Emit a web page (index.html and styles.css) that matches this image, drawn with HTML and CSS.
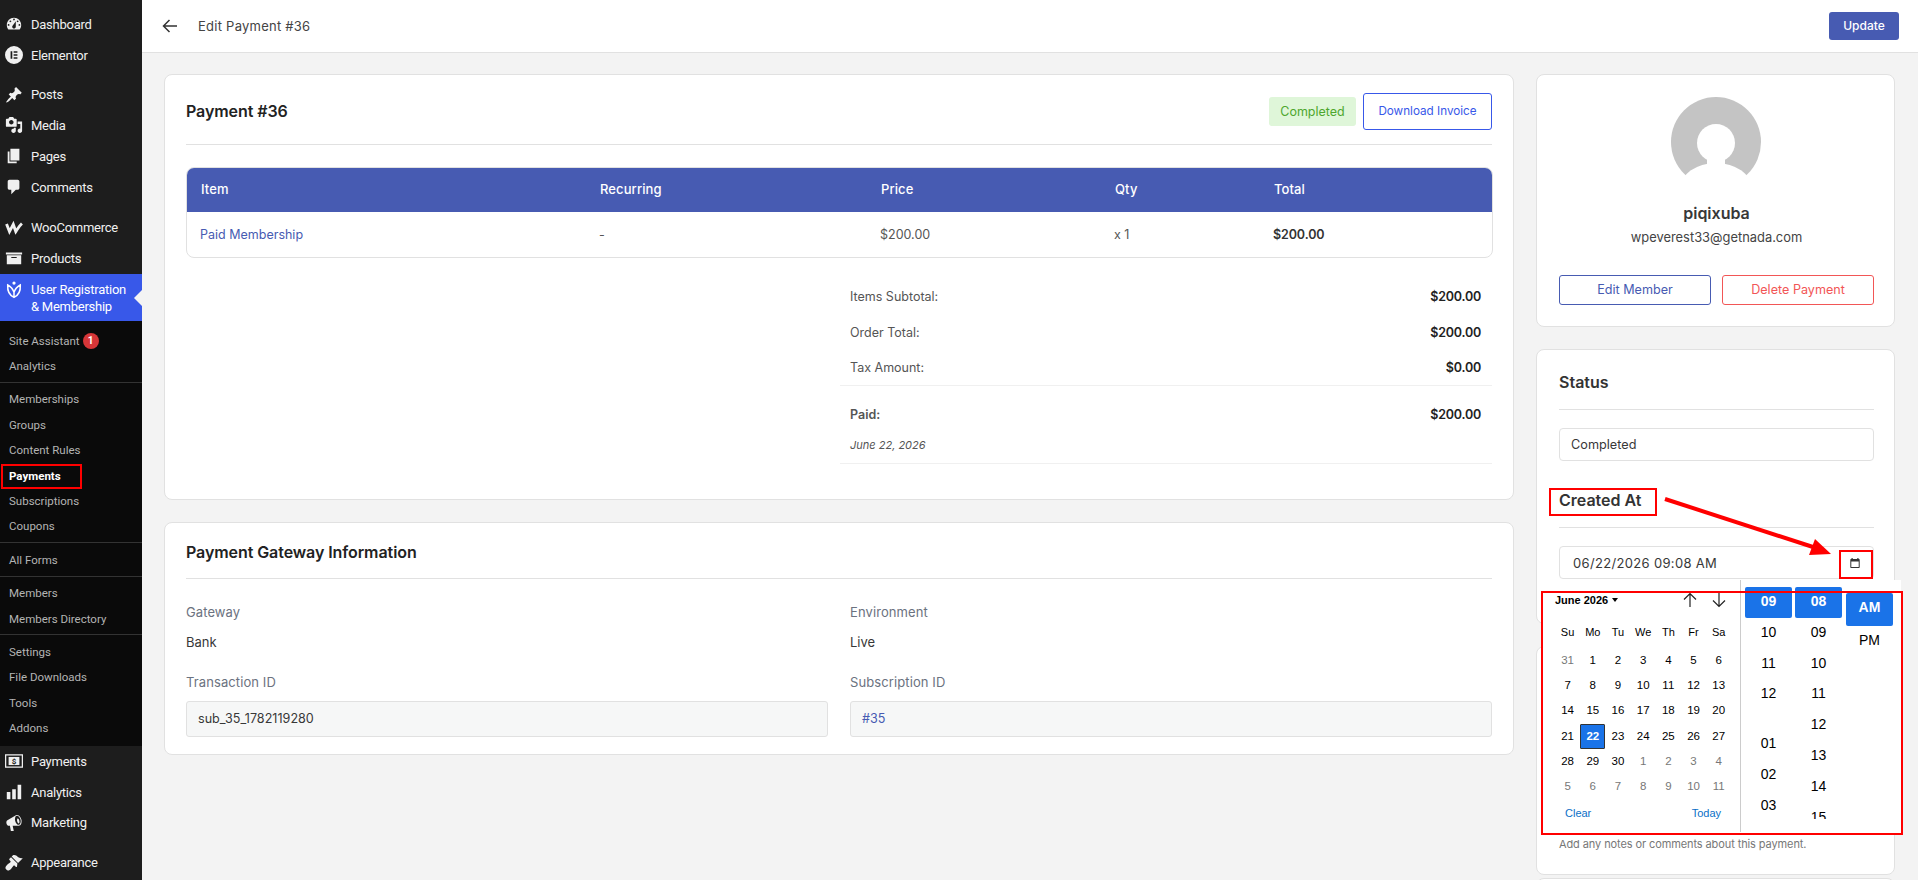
FILE: index.html
```html
<!DOCTYPE html>
<html lang="en">
<head>
	<meta charset="UTF-8">
	<title>Edit Payment #36</title>
	<link rel="stylesheet" href="styles.css">
</head>
<body>
<div class="app">
	<aside class="sidebar">
		<ul class="menu menu-top">
			<li class="menu-item"><svg class="dash" viewBox="0 0 20 20"><path fill-rule="evenodd" d="M3.76 16h12.48c1.1-1.37 1.76-3.11 1.76-5 0-4.42-3.58-8-8-8s-8 3.58-8 8c0 1.89.66 3.63 1.76 5zM10 4c.55 0 1 .45 1 1s-.45 1-1 1-1-.45-1-1 .45-1 1-1zM6 6c.55 0 1 .45 1 1s-.45 1-1 1-1-.45-1-1 .45-1 1-1zm8 0c.55 0 1 .45 1 1s-.45 1-1 1-1-.45-1-1 .45-1 1-1zm-5.37 5.55L12 7v6c0 1.1-.9 2-2 2s-2-.9-2-2c0-.57.24-1.08.63-1.45zM4 10c.55 0 1 .45 1 1s-.45 1-1 1-1-.45-1-1 .45-1 1-1zm12 0c.55 0 1 .45 1 1s-.45 1-1 1-1-.45-1-1 .45-1 1-1z"/></svg>Dashboard</li>
			<li class="menu-item"><svg class="dash" viewBox="0 0 20 20"><path fill-rule="evenodd" d="M10 0a10 10 0 1 0 0 20 10 10 0 0 0 0-20zM6.200 5.700h1.900v8.600H6.200zM9.600 5.700h4.200v1.800H9.600zM9.600 9.100h4.200v1.800H9.600zM9.600 12.500h4.200v1.800H9.600z"/></svg>Elementor</li>
			<li class="menu-sep"></li>
			<li class="menu-item"><svg class="dash" viewBox="0 0 20 20"><path d="M10.44 3.02l1.82-1.82 6.36 6.35-1.83 1.82c-1.05-.68-2.48-.57-3.41.36l-.75.75c-.92.93-1.04 2.35-.35 3.41l-1.83 1.82-2.41-2.41-2.8 2.79c-.42.42-3.38 2.71-3.8 2.29s1.86-3.39 2.28-3.81l2.79-2.79L4.1 9.36l1.83-1.82c1.05.69 2.48.57 3.4-.36l.75-.75c.93-.92 1.05-2.35.36-3.41z"/></svg>Posts</li>
			<li class="menu-item"><svg class="dash" viewBox="0 0 20 20"><path fill-rule="evenodd" d="M13 11V4c0-.55-.45-1-1-1h-1.67L9 1H5L3.67 3H2c-.55 0-1 .45-1 1v7c0 .55.45 1 1 1h10c.55 0 1-.45 1-1zM7 4.500c1.38 0 2.500 1.12 2.500 2.500S8.380 9.500 7 9.500 4.500 8.380 4.500 7 5.620 4.500 7 4.500zM14 6h5v10.500c0 1.38-1.12 2.500-2.500 2.500S14 17.880 14 16.500s1.120-2.500 2.500-2.500c.17 0 .34.02.5.05V9h-3V6zm-4 8.050V13h2v3.500c0 1.380-1.120 2.500-2.500 2.500S7 17.880 7 16.500 8.120 14 9.500 14c.17 0 .34.02.5.05z"/></svg>Media</li>
			<li class="menu-item"><svg class="dash" viewBox="0 0 20 20"><path d="M6 15V2h10v13H6zm-1 1h8v2H3V5h2v11z"/></svg>Pages</li>
			<li class="menu-item"><svg class="dash" viewBox="0 0 20 20"><path d="M5 2h9c1.100 0 2 .9 2 2v7c0 1.100-.9 2-2 2h-2l-5 5v-5H5c-1.100 0-2-.9-2-2V4c0-1.100.9-2 2-2z"/></svg>Comments</li>
			<li class="menu-sep menu-sep-wide"></li>
			<li class="menu-item"><svg class="dash woo-logo" viewBox="0 0 20 20"><path d="M1.700 5.500L5 14l4.200-8L12 14c2-3 4-6.500 6.800-9"/></svg>WooCommerce</li>
			<li class="menu-item"><svg class="dash" viewBox="0 0 20 20"><path fill-rule="evenodd" d="M19 4v2H1V4h18zM2 7h16v10H2V7zm11 3V9H7v1h6z"/></svg>Products</li>
			<li class="menu-item menu-active"><svg class="dash urm-logo" viewBox="0 0 20 20"><circle class="urm-dot" cx="10" cy="2.300" r="1.800"/><path d="M3 4.500C2.600 11 5 16 10 18.200 15 16 17.400 11 17 4.500 14 6 11.500 8 10 12.500 8.500 8 6 6 3 4.500zM10 12.500v5.700"/></svg><span>User Registration<br>&amp; Membership</span></li>
		</ul>
		<div class="submenu">
			<ul class="sub-group sub-first">
				<li class="sub-item">Site Assistant <span class="sub-badge">1</span></li>
				<li class="sub-item">Analytics</li>
			</ul>
			<ul class="sub-group">
				<li class="sub-item">Memberships</li>
				<li class="sub-item">Groups</li>
				<li class="sub-item">Content Rules</li>
				<li class="sub-item sub-current">Payments</li>
				<li class="sub-item">Subscriptions</li>
				<li class="sub-item">Coupons</li>
			</ul>
			<ul class="sub-group">
				<li class="sub-item">All Forms</li>
			</ul>
			<ul class="sub-group">
				<li class="sub-item">Members</li>
				<li class="sub-item">Members Directory</li>
			</ul>
			<ul class="sub-group">
				<li class="sub-item">Settings</li>
				<li class="sub-item">File Downloads</li>
				<li class="sub-item">Tools</li>
				<li class="sub-item">Addons</li>
			</ul>
		</div>
		<ul class="menu">
			<li class="menu-item"><svg class="dash" viewBox="0 0 20 20"><rect class="money-frame" x="0.700" y="3.200" width="18.600" height="13.600"/><rect x="4" y="5.500" width="12" height="9"/><text x="10" y="13.500" class="money-sign">$</text></svg>Payments</li>
			<li class="menu-item"><svg class="dash" viewBox="0 0 20 20"><path d="M18 18V2h-4v16h4zm-6 0V7H8v11h4zm-6 0v-8H2v8h4z"/></svg>Analytics</li>
			<li class="menu-item"><svg class="dash" viewBox="0 0 20 20"><path fill-rule="evenodd" d="M18.150 5.940c.46 1.620.38 3.220-.02 4.480-.42 1.280-1.260 2.180-2.300 2.480-.16.06-.26.06-.4.06-.06.02-.12.02-.18.02-.06.02-.14.02-.22.02H8.500l1.200 5.500c.02.14-.06.26-.14.34-.08.1-.24.16-.34.16H6.950c-.1 0-.26-.06-.34-.16-.08-.08-.16-.2-.14-.34l-1-5.500H4.250c-.5.06-1.080-.18-1.540-.62s-.88-1.080-1.060-1.880c-.24-.8-.2-1.560-.02-2.200.18-.62.58-1.080 1.060-1.300l9.020-5.420c.1-.06.18-.1.24-.16.06-.04.14-.08.24-.12.16-.08.28-.12.5-.18 1.040-.3 2.240.1 3.220 1 .98.880 1.800 2.240 2.260 3.860zm-2.580 5.980c.4-.1.74-.34 1.040-.7.58-.7.860-1.760.860-3.040 0-.64-.1-1.300-.26-1.980-.34-1.360-1.020-2.500-1.780-3.240s-1.680-1.100-2.460-.88c-.82.22-1.400.96-1.700 2-.32 1.040-.28 2.360.06 3.720.38 1.360 1 2.500 1.800 3.240.78.74 1.620 1.100 2.440.88zm-.38-1.440c-.34 0-.6-.28-.94-.74-.3-.46-.54-1.100-.72-1.820-.36-1.440-.14-2.700.52-3 .06-.02.12-.02.2-.02.3 0 .6.28.92.74.32.46.58 1.100.74 1.820.38 1.440.16 2.700-.5 3-.08.02-.14.02-.22.02z"/></svg>Marketing</li>
			<li class="menu-sep"></li>
			<li class="menu-item"><svg class="dash" viewBox="0 0 20 20"><path d="M14.480 11.060L7.410 3.990l1.500-1.500c.5-.56 2.300-.47 3.510.32 1.210.8 1.430 1.280 2.910 2.100 1.180.64 2.450 1.260 4.450.85zm-.71.71L6.700 4.700 4.930 6.470c-.39.39-.39 1.020 0 1.410l1.060 1.060c.39.39.39 1.030 0 1.420-.6.6-1.430 1.110-2.210 1.690-.35.26-.7.53-1.010.84-.9.9-2.300 2.600-2.300 3.700 0 .6 1.700 2.900 2.900 2.900 1.100 0 2.600-1.200 3.500-2.100.31-.31.58-.66.84-1.010.58-.78 1.090-1.610 1.690-2.210.39-.39 1.030-.39 1.420 0l1.060 1.060c.39.39 1.020.39 1.410 0z"/></svg>Appearance</li>
		</ul>
	</aside>

	<div class="main">
		<header class="topbar">
			<svg class="back-arrow" viewBox="0 0 16 16"><path d="M15 8H1.500M7.500 2L1.500 8l6 6"/></svg>
			<span class="topbar-title">Edit Payment #36</span>
			<button class="btn-update">Update</button>
		</header>

		<div class="content">
			<div class="col-left">
				<section class="card">
					<div class="card-head card-head-payment">
						<h2>Payment #36</h2>
						<div class="head-actions">
							<span class="status-pill">Completed</span>
							<a class="btn-outline btn-invoice">Download Invoice</a>
						</div>
					</div>
					<div class="table-wrap">
						<table class="items">
							<colgroup>
								<col class="col-item"><col class="col-rec"><col class="col-price"><col class="col-qty"><col>
							</colgroup>
							<thead>
								<tr><th>Item</th><th>Recurring</th><th>Price</th><th>Qty</th><th>Total</th></tr>
							</thead>
							<tbody>
								<tr>
									<td><a class="link">Paid Membership</a></td>
									<td>-</td>
									<td>$200.00</td>
									<td>x 1</td>
									<td class="strong">$200.00</td>
								</tr>
							</tbody>
						</table>
					</div>
					<div class="summary">
						<div class="sum-row"><span>Items Subtotal:</span><b>$200.00</b></div>
						<div class="sum-row"><span>Order Total:</span><b>$200.00</b></div>
						<div class="sum-row sum-last"><span>Tax Amount:</span><b>$0.00</b></div>
						<div class="sum-paid">
							<div class="sum-row"><span class="paid-label">Paid:</span><b>$200.00</b></div>
							<div class="paid-date">June 22, 2026</div>
						</div>
					</div>
				</section>

				<section class="card card-gateway">
					<div class="card-head card-head-gateway">
						<h2>Payment Gateway Information</h2>
					</div>
					<div class="info-grid">
						<div class="info">
							<div class="info-label">Gateway</div>
							<div class="info-value">Bank</div>
						</div>
						<div class="info">
							<div class="info-label">Environment</div>
							<div class="info-value">Live</div>
						</div>
						<div class="info">
							<div class="info-label">Transaction ID</div>
							<div class="info-box">sub_35_1782119280</div>
						</div>
						<div class="info">
							<div class="info-label">Subscription ID</div>
							<div class="info-box link">#35</div>
						</div>
					</div>
				</section>
			</div>

			<div class="col-right">
				<section class="card card-member">
					<svg class="avatar" viewBox="0 0 90 90"><circle cx="45" cy="45" r="45" fill="#c4c4c4"/><circle cx="45" cy="46" r="19" fill="#fff"/><rect x="36" y="55" width="18" height="16" fill="#fff"/><ellipse cx="45" cy="92" rx="36" ry="26" fill="#fff"/></svg>
					<div class="member-name">piqixuba</div>
					<div class="member-mail">wpeverest33@getnada.com</div>
					<div class="member-btns">
						<a class="btn-outline btn-member">Edit Member</a>
						<a class="btn-outline btn-delete">Delete Payment</a>
					</div>
				</section>

				<section class="card card-status">
					<h3 class="side-title">Status</h3>
					<div class="field">Completed</div>
					<h3 class="side-title side-title-created">Created At</h3>
					<div class="field field-date">
						<span>06/22/2026 09:08 AM</span>
						<svg class="cal-icon" viewBox="0 0 12 12"><path fill-rule="evenodd" d="M2.500 1h1.200v1h4.600V1h1.200v1h.5c.4 0 .7.3.7.7v7.600c0 .4-.3.7-.7.7H2c-.4 0-.7-.3-.7-.7V2.700c0-.4.3-.7.7-.7h.5zM2.300 4.500v5.500h7.400V4.500z"/></svg>
					</div>
				</section>

				<section class="card card-notes">
					<p class="notes-hint">Add any notes or comments about this payment.</p>
				</section>
				<section class="card card-next"></section>
			</div>
		</div>
	</div>

	<!-- native date picker, open over the sidebar cards -->
	<div class="picker">
		<div class="cal">
			<div class="cal-head">
				<span class="cal-month">June 2026 <i class="caret"></i></span>
				<span class="cal-nav">
					<svg viewBox="0 0 14 16"><path d="M7 15V1.500M1 7.500l6-6 6 6"/></svg>
					<svg viewBox="0 0 14 16"><path d="M7 1v13.500M1 8.500l6 6 6-6"/></svg>
				</span>
			</div>
			<div class="cal-grid">
				<span class="wd">Su</span><span class="wd">Mo</span><span class="wd">Tu</span><span class="wd">We</span><span class="wd">Th</span><span class="wd">Fr</span><span class="wd">Sa</span>
				<span class="off">31</span><span>1</span><span>2</span><span>3</span><span>4</span><span>5</span><span>6</span>
				<span>7</span><span>8</span><span>9</span><span>10</span><span>11</span><span>12</span><span>13</span>
				<span>14</span><span>15</span><span>16</span><span>17</span><span>18</span><span>19</span><span>20</span>
				<span>21</span><span class="today">22</span><span>23</span><span>24</span><span>25</span><span>26</span><span>27</span>
				<span>28</span><span>29</span><span>30</span><span class="off">1</span><span class="off">2</span><span class="off">3</span><span class="off">4</span>
				<span class="off">5</span><span class="off">6</span><span class="off">7</span><span class="off">8</span><span class="off">9</span><span class="off">10</span><span class="off">11</span>
			</div>
			<div class="cal-foot"><a>Clear</a><a>Today</a></div>
		</div>
		<div class="time-col">
			<span class="sel">09</span><span>10</span><span>11</span><span>12</span><span class="hour-gap">01</span><span>02</span><span>03</span>
		</div>
		<div class="time-col">
			<span class="sel">08</span><span>09</span><span>10</span><span>11</span><span>12</span><span>13</span><span>14</span><span>15</span>
		</div>
		<div class="time-col time-ampm">
			<span class="sel">AM</span><span>PM</span>
		</div>
	</div>

	<!-- annotations on the screenshot -->
	<div class="mark mark-payments"></div>
	<div class="mark mark-created"></div>
	<div class="mark mark-icon"></div>
	<div class="mark mark-picker"></div>
	<svg class="mark-arrow" viewBox="0 0 1918 880"><path class="arrow-line" d="M1665 499L1813 547"/><path class="arrow-head" d="M1815 539L1809 555L1831 554z"/></svg>
</div>
</body>
</html>
```

FILE: styles.css
```css
* {
	box-sizing: border-box;
}

body {
	margin: 0;
	font-family: Inter, "Liberation Sans", sans-serif;
	font-size: 13px;
	color: #383838;
	background: #f3f3f3;
}

h2,
h3,
p,
ul {
	margin: 0;
	padding: 0;
}

ul {
	list-style: none;
}

.app {
	position: relative;
	display: flex;
	width: 1918px;
	height: 880px;
	overflow: hidden;
}

/* sidebar */
.sidebar {
	width: 142px;
	flex: none;
	background: #1d1d1d;
	font-family: Roboto, sans-serif;
	font-size: 13px;
	color: #f0f0f0;
}

.menu-top {
	padding-top: 9px;
}

.menu-item {
	display: flex;
	align-items: center;
	height: 30.75px;
	padding-left: 31px;
	letter-spacing: -0.25px;
	position: relative;
}

.menu-sep {
	height: 9px;
}

.menu-sep-wide {
	height: 10px;
}

.dash {
	position: absolute;
	left: 5px;
	top: 6px;
	width: 18px;
	height: 18px;
	fill: #f0f0f0;
}

.woo-logo {
	fill: none;
	stroke: #f0f0f0;
	stroke-width: 3.2;
}

.urm-logo {
	top: 7px;
	fill: none;
	stroke: #fff;
	stroke-width: 1.7;
}

.urm-dot {
	fill: #fff;
	stroke: none;
}

.money-frame {
	fill: none;
	stroke: #f0f0f0;
	stroke-width: 1.4;
}

.money-sign {
	font-size: 9px;
	font-weight: 700;
	font-family: Roboto, sans-serif;
	text-anchor: middle;
	fill: #1d1d1d;
}

.menu-active {
	height: 47px;
	background: #3858e9;
	color: #fff;
	line-height: 17px;
}

.menu-active::after {
	content: "";
	position: absolute;
	right: 0;
	top: 16px;
	border: 8px solid transparent;
	border-left: 0;
	border-right-color: #f3f3f3;
}

.submenu {
	background: #0a0a0a;
	color: #b4b4b4;
	font-size: 11.5px;
	height: 425px;
}

.sub-group {
	padding: 4px 0 3px;
	border-bottom: 1px solid #333;
}

.sub-group:last-child {
	border-bottom: 0;
}

.sub-first {
	padding-top: 7px;
}

.sub-item {
	display: flex;
	align-items: center;
	gap: 3px;
	height: 25.4px;
	padding-left: 9px;
}

.sub-current {
	color: #fff;
	font-weight: 700;
}

.sub-badge {
	width: 16px;
	height: 16px;
	border-radius: 50%;
	background: #d63638;
	color: #fff;
	font-size: 10px;
	font-weight: 700;
	line-height: 16px;
	text-align: center;
}

/* main area */
.main {
	flex: 1;
	min-width: 0;
}

.topbar {
	display: flex;
	align-items: center;
	height: 53px;
	padding: 0 19px 1px 20px;
	background: #fff;
	border-bottom: 1px solid #e1e1e1;
}

.back-arrow {
	width: 16px;
	height: 16px;
	fill: none;
	stroke: #333;
	stroke-width: 1.5;
}

.topbar-title {
	margin-left: 20px;
	font-size: 13px;
	letter-spacing: 0.25px;
	color: #444;
}

.btn-update {
	margin-left: auto;
	width: 70px;
	height: 28px;
	border: 0;
	border-radius: 3px;
	background: #475bb2;
	color: #fff;
	font: 500 12px Inter, sans-serif;
}

.content {
	display: flex;
	gap: 22px;
	padding: 21px 23px 0 22px;
}

.col-left {
	flex: 1;
	min-width: 0;
}

.col-right {
	width: 359px;
	flex: none;
}

.card {
	background: #fff;
	border: 1px solid #e1e1e1;
	border-radius: 8px;
	padding: 0 21px;
}

.card-head {
	display: flex;
	align-items: center;
	justify-content: space-between;
	border-bottom: 1px solid #e1e1e1;
}

.card-head h2 {
	font-size: 16px;
	font-weight: 600;
	letter-spacing: -0.08px;
	color: #222;
}

.card-head-payment {
	height: 70px;
	padding-top: 3px;
}

.head-actions {
	display: flex;
	align-items: center;
	gap: 7px;
}

.status-pill {
	display: block;
	width: 87px;
	height: 29px;
	line-height: 29px;
	text-align: center;
	border-radius: 3px;
	background: #dff6d9;
	color: #4ea72e;
	font-size: 12.5px;
}

.btn-outline {
	display: block;
	text-align: center;
	border: 1px solid;
	border-radius: 3px;
}

.btn-invoice {
	width: 129px;
	height: 37px;
	line-height: 35px;
	border-color: #3858e9;
	color: #3858e9;
	font-size: 11.7px;
}

.table-wrap {
	margin-top: 22px;
	width: 1307px;
	border: 1px solid #e1e1e1;
	border-radius: 8px;
	overflow: hidden;
}

.items {
	width: 100%;
	table-layout: fixed;
	border-collapse: collapse;
}

.col-item {
	width: 399px;
}

.col-rec {
	width: 281px;
}

.col-price {
	width: 234px;
}

.col-qty {
	width: 159px;
}

.items th {
	height: 44px;
	padding: 0 0 2px 14px;
	background: #475bb2;
	color: #fff;
	font-weight: 500;
	text-align: left;
	letter-spacing: 0.1px;
}

.items td {
	height: 45px;
	padding: 0 0 0 13px;
	font-size: 12.5px;
	color: #555;
}

.items td.strong {
	font-weight: 600;
	letter-spacing: -0.1px;
	color: #333;
}

.link {
	color: #475bb2;
}

.summary {
	width: 652px;
	margin: 20px 0 0 auto;
	padding-bottom: 35px;
	font-size: 12.5px;
}

.sum-row {
	display: flex;
	align-items: center;
	justify-content: space-between;
	height: 36px;
	padding: 0 11px 0 10px;
	color: #555;
}

.sum-row b {
	font-weight: 600;
	letter-spacing: -0.2px;
	color: #222;
}

.sum-last {
	border-bottom: 1px solid #f0f0f0;
}

.sum-paid {
	padding-top: 10px;
	height: 78px;
	border-bottom: 1px solid #f0f0f0;
}

.paid-label {
	font-weight: 600;
}

.paid-date {
	padding: 6px 10px 0;
	font-size: 11px;
	font-style: italic;
	color: #555;
}

.card-gateway {
	margin-top: 22px;
	padding-bottom: 17px;
}

.card-head-gateway {
	height: 56px;
	padding-top: 3px;
}

.info-grid {
	display: grid;
	grid-template-columns: 1fr 1fr;
	column-gap: 22px;
	row-gap: 10px;
	padding-top: 23px;
}

.info-label {
	height: 20px;
	line-height: 20px;
	color: #6b7280;
	letter-spacing: 0.1px;
}

.info-value {
	height: 40px;
	line-height: 40px;
	color: #383838;
}

.info-box {
	height: 36px;
	line-height: 34px;
	margin-top: 9px;
	padding: 0 11px;
	border: 1px solid #e1e1e1;
	border-radius: 3px;
	background: #f6f7f7;
	font-size: 12.6px;
}

/* right column */
.col-right .card {
	padding: 0 20px 0 22px;
}

.col-right .card-member {
	display: flex;
	flex-direction: column;
	align-items: center;
	height: 253px;
	padding-top: 22px;
}

.avatar {
	width: 90px;
	height: 90px;
	flex: none;
	margin-right: 1px;
}

.member-name {
	margin-top: 16px;
	font-size: 16px;
	font-weight: 600;
	line-height: 20px;
}

.member-mail {
	margin-top: 6px;
	font-size: 12.9px;
	line-height: 18px;
	color: #444;
}

.member-btns {
	display: flex;
	gap: 11px;
	width: 100%;
	margin-top: 28px;
}

.btn-member,
.btn-delete {
	flex: 1;
	height: 30px;
	line-height: 28px;
	font-size: 12.6px;
}

.btn-member {
	border-color: #475bb2;
	color: #475bb2;
}

.btn-delete {
	border-color: #f25656;
	color: #f25656;
}

.col-right .card-status {
	margin-top: 22px;
	height: 275px;
	padding-top: 22px;
}

.side-title {
	height: 38px;
	font-size: 16px;
	font-weight: 600;
	line-height: 20px;
	color: #333;
	border-bottom: 1px solid #e1e1e1;
}

.side-title-created {
	margin-top: 29px;
}

.field {
	display: flex;
	align-items: center;
	justify-content: space-between;
	height: 33px;
	margin-top: 18px;
	padding: 0 11px;
	border: 1px solid #e1e1e1;
	border-radius: 4px;
	font-size: 12.7px;
}

.field-date {
	margin-top: 18px;
	padding: 0 12px 0 13px;
	font-size: 13px;
	letter-spacing: 0.33px;
}

.cal-icon {
	width: 12px;
	height: 12px;
	fill: #333;
}

.col-right .card-notes {
	display: flex;
	align-items: flex-end;
	margin-top: 22px;
	height: 229px;
	padding-bottom: 23px;
}

.notes-hint {
	font-size: 11px;
	letter-spacing: -0.1px;
	color: #777;
}

.card-next {
	margin-top: 3px;
	height: 40px;
}

/* date picker popup */
.picker {
	position: absolute;
	left: 1541px;
	top: 580px;
	width: 360px;
	height: 253px;
	display: flex;
	background: #fff;
	font-family: "Liberation Sans", Arial, sans-serif;
	color: #000;
}

.cal {
	width: 200px;
	height: 252px;
	flex: none;
	margin-right: 4px;
	padding-left: 14px;
	border-right: 1px solid #ccc;
}

.cal-head {
	display: flex;
	align-items: center;
	justify-content: space-between;
	height: 40px;
	padding: 0 14px 0 0;
}

.cal-month {
	font-size: 11px;
	font-weight: 700;
}

.caret {
	display: inline-block;
	margin-left: 1px;
	vertical-align: 2px;
	border: 3px solid transparent;
	border-bottom: 0;
	border-top: 4px solid #000;
}

.cal-nav {
	display: flex;
	gap: 15px;
}

.cal-nav svg {
	width: 14px;
	height: 16px;
	fill: none;
	stroke: #222;
	stroke-width: 1.2;
}

.cal-grid {
	display: grid;
	grid-template-columns: repeat(7, 25.2px);
	grid-template-rows: 28px;
	grid-auto-rows: 25.2px;
	font-size: 11.5px;
	text-align: center;
	line-height: 25px;
}

.wd {
	font-size: 11px;
}

.off {
	color: #777;
}

.today {
	background: #1a73e8;
	border: 1px solid #333;
	border-radius: 1px;
	color: #fff;
	font-weight: 700;
	line-height: 23px;
}

.cal-foot {
	display: flex;
	justify-content: space-between;
	padding: 8px 19px 0 10px;
	font-size: 11px;
	color: #0b6fc7;
}

.time-col {
	display: flex;
	flex-direction: column;
	width: 47px;
	height: 232px;
	flex: none;
	margin: 7px 3px 0 0;
	overflow: hidden;
	font-size: 14px;
	text-align: center;
}

.time-col span {
	flex: none;
	height: 30.8px;
	line-height: 28px;
}

.time-col .sel {
	background: #1a73e8;
	border-radius: 2px;
	color: #fff;
	font-weight: 700;
}

.hour-gap {
	margin-top: 19px;
}

.time-ampm {
	margin-top: 13px;
	margin-left: 1px;
	height: 70px;
}

.time-ampm span {
	height: 33px;
	line-height: 29px;
}

.time-ampm .sel {
	line-height: 28px;
}

/* red marks */
.mark {
	position: absolute;
	border: 2px solid #f00;
}

.mark-payments {
	left: 1px;
	top: 464px;
	width: 81px;
	height: 25px;
}

.mark-created {
	left: 1549px;
	top: 488px;
	width: 108px;
	height: 28px;
}

.mark-icon {
	left: 1839px;
	top: 550px;
	width: 34px;
	height: 29px;
}

.mark-picker {
	left: 1541px;
	top: 591px;
	width: 362px;
	height: 244px;
}

.mark-arrow {
	position: absolute;
	left: 0;
	top: 0;
	width: 1918px;
	height: 880px;
}

.arrow-line {
	stroke: #f00;
	stroke-width: 4;
	fill: none;
}

.arrow-head {
	fill: #f00;
}
```
